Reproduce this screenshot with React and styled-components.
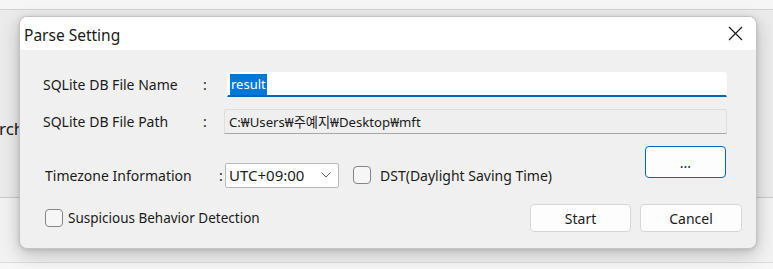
import React from 'react';
import styled, { createGlobalStyle } from 'styled-components';

const Global = createGlobalStyle`
  html, body { margin: 0; padding: 0; }
  body {
    width: 773px;
    height: 269px;
    overflow: hidden;
    background: #f3f3f3;
    font-family: 'Noto Sans', 'Noto Sans CJK KR', sans-serif;
    color: #1b1b1b;
  }
`;

const Desk = styled.div`
  position: relative;
  width: 773px;
  height: 269px;
  display: flex;
  flex-direction: column;
`;

const TopStrip = styled.div`
  height: 9px;
  background: #f6f6f6;
  border-bottom: 1px solid #d2d2d2;
`;

const Middle = styled.div`
  height: 188px;
  background: #ebebeb;
  border-bottom: 1px solid #c9c9c9;
  display: flex;
  align-items: flex-start;
  padding-top: 107px;
  box-sizing: border-box;
`;

const Cut = styled.span`
  font-size: 17px;
  margin-left: -1px;
  color: #1b1b1b;
`;

const Lower = styled.div`
  flex: 1;
  background: #f2f2f2;
  display: flex;
  flex-direction: column;
  justify-content: flex-end;
`;

const LowerLine = styled.div`
  height: 6px;
  border-top: 1px solid #dddddd;
  background: #f7f7f7;
`;

const Dialog = styled.div`
  position: absolute;
  left: 19px;
  top: 16px;
  width: 738px;
  height: 233px;
  background: #f0f0f0;
  border: 1px solid #c4c4c4;
  border-radius: 8px;
  box-sizing: border-box;
  overflow: hidden;
  box-shadow: 0 6px 18px rgba(0, 0, 0, 0.22), 0 1px 4px rgba(0, 0, 0, 0.12);
  display: flex;
  flex-direction: column;
`;

const TitleBar = styled.div`
  height: 33px;
  background: #ffffff;
  display: flex;
  align-items: center;
  justify-content: space-between;
  padding: 0 13px 0 4px;
  flex-shrink: 0;
`;

const Title = styled.span`
  font-size: 15.5px;
  color: #1b1b1b;
  margin-top: 2px;
`;

const Close = styled.svg`
  width: 15px;
  height: 15px;
`;

const Body = styled.div`
  flex: 1;
  padding: 22px 14px 0 23px;
  display: flex;
  flex-direction: column;
`;

const Row = styled.div`
  display: flex;
  align-items: center;
  height: ${({ h }) => h}px;
  margin-top: ${({ mt }) => mt || 0}px;
`;

const Label = styled.span`
  font-size: 14px;
  width: ${({ w }) => w}px;
  padding-left: ${({ pl }) => pl || 0}px;
  flex-shrink: 0;
  white-space: nowrap;
`;

const Colon = styled.span`
  font-size: 14px;
  width: ${({ w }) => w}px;
  flex-shrink: 0;
`;

const TextBox = styled.div`
  box-sizing: border-box;
  height: 25px;
  width: ${({ w }) => w}px;
  background: ${({ active }) => (active ? '#ffffff' : '#efefef')};
  border: 1px solid ${({ active }) => (active ? '#ffffff' : '#dedede')};
  border-bottom: ${({ active }) => (active ? '2px solid #0067c0' : '1px solid #a8a8a8')};
  border-radius: 3px 3px 0 0;
  display: flex;
  align-items: center;
  padding-left: 4px;
  font-size: 13.2px;
  white-space: nowrap;
`;

const Selected = styled.span`
  background: #0078d7;
  color: #ffffff;
  padding: 1px 1px 2px 1px;
  margin-left: -2px;
  font-size: 13px;
`;

const Zone = styled.div`
  display: flex;
  align-items: flex-start;
  margin-top: 12px;
  height: 41px;
`;

const ZoneLeft = styled.div`
  display: flex;
  align-items: center;
  margin-top: 17px;
  height: 24px;
`;

const Select = styled.div`
  box-sizing: border-box;
  width: 114px;
  height: 25px;
  background: #ffffff;
  border: 1px solid #b9b9b9;
  border-radius: 2px;
  display: flex;
  align-items: center;
  justify-content: space-between;
  padding: 0 7px 0 3px;
  font-size: 15px;
`;

const Chevron = styled.svg`
  width: 10px;
  height: 6px;
`;

const Check = styled.label`
  display: flex;
  align-items: center;
  gap: ${({ gap }) => gap}px;
  margin-left: ${({ ml }) => ml || 0}px;
  font-size: ${({ fs }) => fs || 14}px;
  white-space: nowrap;
`;

const Box = styled.span`
  box-sizing: border-box;
  width: 18px;
  height: 18px;
  border: 1px solid #858585;
  border-radius: 4px;
  background: #f6f6f6;
  flex-shrink: 0;
`;

const Button = styled.button`
  box-sizing: border-box;
  width: ${({ w }) => w}px;
  height: ${({ h }) => h || 28}px;
  margin-left: ${({ push, ml }) => (push ? 'auto' : `${ml || 0}px`)};
  margin-right: ${({ mr }) => mr || 0}px;
  background: #fdfdfd;
  border: 1px solid ${({ focus }) => (focus ? '#0067c0' : '#d6d6d6')};
  border-radius: 4px;
  font-family: 'Noto Sans', sans-serif;
  font-size: 14px;
  color: #1b1b1b;
  padding: 0;
  flex-shrink: 0;
`;

const Bottom = styled.div`
  display: flex;
  align-items: center;
  margin-top: 17px;
`;

export default function App() {
  return (
    <>
      <Global />
      <Desk>
        <TopStrip />
        <Middle>
          <Cut>rch</Cut>
        </Middle>
        <Lower>
          <LowerLine />
        </Lower>

        <Dialog>
          <TitleBar>
            <Title>Parse Setting</Title>
            <Close viewBox="0 0 15 15">
              <path d="M1 1 L14 14 M14 1 L1 14" stroke="#1b1b1b" strokeWidth="1.2" fill="none" />
            </Close>
          </TitleBar>

          <Body>
            <Row h={25}>
              <Label w={160}>SQLite DB File Name</Label>
              <Colon w={24}>:</Colon>
              <TextBox w={500} active>
                <Selected>result</Selected>
              </TextBox>
            </Row>
            <Row h={25} mt={12}>
              <Label w={160}>SQLite DB File Path</Label>
              <Colon w={21}>:</Colon>
              <TextBox w={503}>C:₩Users₩주예지₩Desktop₩mft</TextBox>
            </Row>

            <Zone>
              <ZoneLeft>
                <Label w={174} pl={2}>Timezone Information</Label>
                <Colon w={6}>:</Colon>
                <Select>
                  UTC+09:00
                  <Chevron viewBox="0 0 10 6">
                    <path d="M0.5 0.5 L5 5 L9.5 0.5" stroke="#606060" strokeWidth="1" fill="none" />
                  </Chevron>
                </Select>
                <Check gap={9} ml={14}>
                  <Box />
                  DST(Daylight Saving Time)
                </Check>
              </ZoneLeft>
              <Button w={81} h={32} push mr={16} focus>...</Button>
            </Zone>

            <Bottom>
              <Check gap={5} ml={2} fs={13.5}>
                <Box />
                Suspicious Behavior Detection
              </Check>
              <Button w={101} push>Start</Button>
              <Button w={102} ml={9}>Cancel</Button>
            </Bottom>
          </Body>
        </Dialog>
      </Desk>
    </>
  );
}
